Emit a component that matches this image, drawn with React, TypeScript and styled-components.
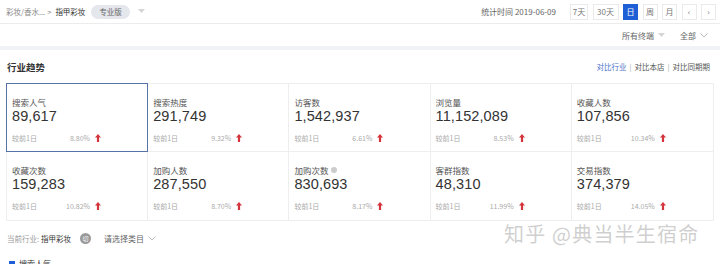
import styled, { createGlobalStyle } from "styled-components";

const GlobalStyle = createGlobalStyle`
  html, body {
    margin: 0;
    padding: 0;
    background: #fff;
    overflow: hidden;
  }
  body {
    font-family: "Noto Sans CJK SC", "Liberation Sans", sans-serif;
    color: #333;
  }
`;

type Metric = { label: string; value: string; pct: string; info?: boolean };

const metrics: Metric[] = [
  { label: "搜索人气", value: "89,617", pct: "8.80%" },
  { label: "搜索热度", value: "291,749", pct: "9.32%" },
  { label: "访客数", value: "1,542,937", pct: "6.61%" },
  { label: "浏览量", value: "11,152,089", pct: "8.53%" },
  { label: "收藏人数", value: "107,856", pct: "10.34%" },
  { label: "收藏次数", value: "159,283", pct: "10.82%" },
  { label: "加购人数", value: "287,550", pct: "8.70%" },
  { label: "加购次数", value: "830,693", pct: "8.17%", info: true },
  { label: "客群指数", value: "48,310", pct: "11.99%" },
  { label: "交易指数", value: "374,379", pct: "14.05%" },
];

const periods = [
  { key: "7天", w: 18 },
  { key: "30天", w: 26 },
  { key: "日", w: 15 },
  { key: "周", w: 15 },
  { key: "月", w: 15 },
  { key: "‹", w: 15 },
  { key: "›", w: 15 },
];

const UpArrow = () => (
  <svg width="6" height="8" viewBox="0 0 6 8">
    <path d="M3 0 L6 3.6 H4.1 V8 H1.9 V3.6 H0 Z" fill="#d4343c" />
  </svg>
);

const Caret = () => (
  <svg width="7" height="5" viewBox="0 0 7 5">
    <path d="M0 0 H7 L3.5 4 Z" fill="#d5d5d5" />
  </svg>
);

const Chevron = () => (
  <svg width="8" height="5" viewBox="0 0 8 5">
    <path d="M0.5 0.5 L4 4 L7.5 0.5" stroke="#bbb" strokeWidth="1" fill="none" />
  </svg>
);

export default function App() {
  return (
    <Page>
      <GlobalStyle />
      <TopBar>
        <Crumbs>
          <span>彩妆/香水...</span>
          <Sep>&gt;</Sep>
          <Strong>指甲彩妆</Strong>
          <Badge>专业版</Badge>
          <Caret />
        </Crumbs>
        <Right>
          <DateText>统计时间 2019-06-09</DateText>
          <Periods>
            {periods.map((p) => (
              <PeriodBtn key={p.key} $active={p.key === "日"} $w={p.w}>
                {p.key}
              </PeriodBtn>
            ))}
          </Periods>
        </Right>
      </TopBar>
      <FilterBar>
        <Filter>
          所有终端 <Caret />
        </Filter>
        <Filter>
          全部 <Chevron />
        </Filter>
      </FilterBar>
      <Band />
      <Panel>
        <PanelHead>
          <Title>行业趋势</Title>
          <Compare>
            <CompareLink $active>对比行业</CompareLink>
            <Bar>|</Bar>
            <CompareLink>对比本店</CompareLink>
            <Bar>|</Bar>
            <CompareLink>对比同期期</CompareLink>
          </Compare>
        </PanelHead>
        <Grid>
          {metrics.map((m, i) => (
            <Cell key={m.label} $selected={i === 0}>
              <Label>
                {m.label}
                {m.info && <InfoDot />}
              </Label>
              <Value>{m.value}</Value>
              <Sub>
                <SubLabel>较前1日</SubLabel>
                <Pct>{m.pct}</Pct>
                <UpArrow />
              </Sub>
            </Cell>
          ))}
        </Grid>
        <Footer>
          <Current>
            当前行业:<Strong>指甲彩妆</Strong>
          </Current>
          <CatIcon>切</CatIcon>
          <Filter>
            请选择类目 <Chevron />
          </Filter>
          <Watermark>知乎 @典当半生宿命</Watermark>
        </Footer>
        <Legend>
          <Swatch />
          搜索人气
        </Legend>
      </Panel>
    </Page>
  );
}

const Page = styled.div`
  width: 720px;
  height: 264px;
  overflow: hidden;
`;

const TopBar = styled.div`
  height: 23px;
  border-bottom: 1px solid #ececec;
  display: flex;
  align-items: center;
  justify-content: space-between;
  padding: 0 4px 0 6px;
`;

const Crumbs = styled.div`
  display: flex;
  align-items: center;
  font-size: 7.5px;
  color: #888;
  svg {
    margin-left: 8px;
  }
`;

const Sep = styled.span`
  margin: 0 2px;
`;

const Strong = styled.span`
  color: #333;
  margin-left: 2px;
`;

const Badge = styled.span`
  margin-left: 6px;
  background: #e4e7ec;
  color: #666;
  border-radius: 8px;
  padding: 2px 8px;
  font-size: 7.5px;
  line-height: 10px;
`;

const Right = styled.div`
  display: flex;
  align-items: center;
`;

const DateText = styled.span`
  font-size: 8px;
  color: #666;
  margin-right: 14px;
`;

const Periods = styled.div`
  display: flex;
  gap: 4.5px;
`;

const PeriodBtn = styled.span<{ $active?: boolean; $w: number }>`
  width: ${(p) => p.$w}px;
  height: 16px;
  box-sizing: border-box;
  display: flex;
  align-items: center;
  justify-content: center;
  font-size: 8px;
  border: 1px solid ${(p) => (p.$active ? "#1f5fd6" : "#eaeaea")};
  background: ${(p) => (p.$active ? "#1f5fd6" : "#fff")};
  color: ${(p) => (p.$active ? "#fff" : "#777")};
`;

const FilterBar = styled.div`
  height: 22px;
  display: flex;
  align-items: center;
  justify-content: flex-end;
  gap: 15px;
  padding-right: 12px;
`;

const Filter = styled.span`
  display: flex;
  align-items: center;
  gap: 4px;
  font-size: 8px;
  color: #666;
`;

const Band = styled.div`
  height: 4px;
  background: #f0f2f5;
`;

const Panel = styled.div`
  padding: 0 6px;
`;

const PanelHead = styled.div`
  height: 33px;
  display: flex;
  align-items: center;
  justify-content: space-between;
  padding: 0 4px 0 1px;
`;

const Title = styled.div`
  font-size: 9.5px;
  font-weight: bold;
  color: #333;
`;

const Compare = styled.div`
  display: flex;
  align-items: center;
  font-size: 7.5px;
  color: #555;
`;

const CompareLink = styled.span<{ $active?: boolean }>`
  color: ${(p) => (p.$active ? "#4a72c9" : "#555")};
`;

const Bar = styled.span`
  color: #aaa;
  margin: 0 3px;
`;

const Grid = styled.div`
  display: grid;
  grid-template-columns: repeat(5, 1fr);
  grid-auto-rows: 68px;
  border: 1px solid #eee;
  width: 708px;
  box-sizing: border-box;
`;

const Cell = styled.div<{ $selected?: boolean }>`
  position: relative;
  padding: 12px 5px 0 5px;
  box-sizing: border-box;
  border-right: 1px solid #eee;
  border-bottom: 1px solid #eee;
  &:nth-child(5n) {
    border-right: none;
  }
  &:nth-child(n + 6) {
    border-bottom: none;
  }
  ${(p) =>
    p.$selected &&
    `
    &::after {
      content: "";
      position: absolute;
      inset: -1px;
      border: 1.5px solid #5673a8;
      pointer-events: none;
    }
  `}
`;

const Label = styled.div`
  display: flex;
  align-items: center;
  gap: 3px;
  font-size: 8.5px;
  color: #555;
  height: 11px;
`;

const InfoDot = styled.span`
  width: 6px;
  height: 6px;
  border-radius: 50%;
  background: #ccc;
`;

const Value = styled.div`
  font-size: 14.5px;
  color: #333;
  line-height: 18px;
  font-family: "Liberation Sans", "Noto Sans CJK SC", sans-serif;
  letter-spacing: 0.1px;
`;

const Sub = styled.div`
  display: flex;
  align-items: center;
  margin-top: 8px;
  font-size: 7px;
  color: #aaa;
  svg {
    margin-left: 5px;
  }
`;

const SubLabel = styled.span`
  width: 46px;
`;

const Pct = styled.span`
  width: 32px;
  text-align: right;
`;

const Footer = styled.div`
  position: relative;
  height: 35px;
  display: flex;
  align-items: center;
  padding-left: 1px;
`;

const Current = styled.span`
  font-size: 7.5px;
  color: #999;
  display: flex;
`;

const CatIcon = styled.span`
  width: 11px;
  height: 11px;
  border-radius: 50%;
  background: #9a9a9a;
  color: #fff;
  font-size: 6px;
  display: flex;
  align-items: center;
  justify-content: center;
  margin: 0 13px 0 9px;
`;

const Watermark = styled.span`
  position: absolute;
  left: 498px;
  top: -2px;
  font-size: 20px;
  color: rgba(160, 160, 160, 0.5);
  letter-spacing: 1.2px;
  white-space: nowrap;
`;

const Legend = styled.div`
  display: flex;
  align-items: center;
  gap: 4px;
  font-size: 8px;
  color: #333;
  padding-left: 3px;
  margin-top: 2px;
`;

const Swatch = styled.span`
  width: 6px;
  height: 6px;
  background: #1f5fd6;
`;
